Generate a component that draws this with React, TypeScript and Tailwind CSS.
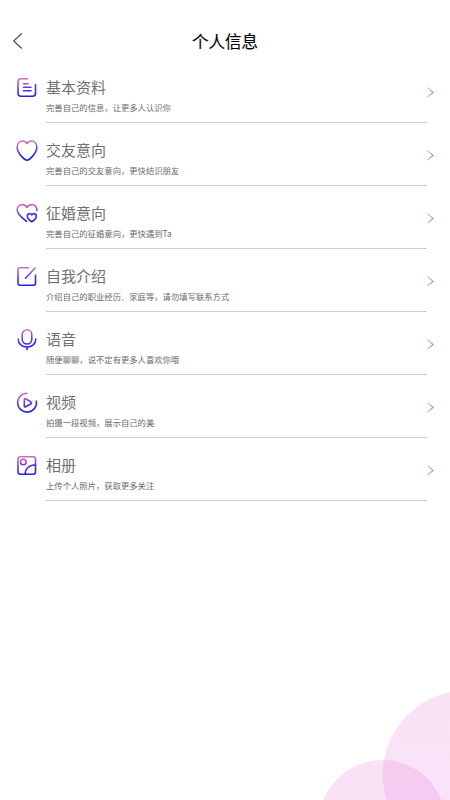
import React from 'react';

const icons: Record<string, React.ReactNode> = {
  profile: (
    <>
      <path d="M11.500 1.700H5a3 3 0 0 0-3 3v11.500a3 3 0 0 0 3 3h11.500a3 3 0 0 0 3-3V7.500" />
      <path d="M7.500 6.700h4.500M7.500 10.200h7.500M7.500 13.700h7.500" />
    </>
  ),
  heart: (
    <path d="M11 20.300C8.800 20 1.200 13.800 1.200 7.200C1.200 3.500 3.600 1 6.600 1c2 0 3.500 1 4.400 2.600C11.900 2 13.400 1 15.400 1c3 0 5.400 2.500 5.400 6.200C20.800 13.800 13.200 20 11 20.300z" />
  ),
  hearts: (
    <>
      <path d="M10.500 18.300C7 15.500 1.200 11.800 1.200 6.800C1.200 3.700 3.500 1.600 6.200 1.600c2 0 3.700 1 4.800 2.800C12.100 2.600 13.800 1.600 15.800 1.600c2.800 0 5 2.200 5 5.200v.7" />
      <path d="M15.800 18.800c-1-.6-4.500-3-4.500-5.700c0-1.500 1.100-2.500 2.400-2.500c.9 0 1.700.5 2.100 1.400c.4-.9 1.200-1.400 2.100-1.400c1.300 0 2.400 1 2.400 2.500c0 2.700-3.500 5.100-4.500 5.700z" />
    </>
  ),
  edit: (
    <>
      <path d="M12.500 1.700H3.800A1.800 1.800 0 0 0 2 3.500v13.900a1.800 1.800 0 0 0 1.800 1.800h13.900a1.800 1.800 0 0 0 1.800-1.800V9" />
      <path d="M9.500 12.200L19 2" />
    </>
  ),
  voice: (
    <>
      <rect x="6.200" y=".8" width="9.600" height="14.200" rx="4.800" />
      <path d="M2.200 10c0 4.800 3.800 8 8.800 8s8.800-3.200 8.800-8M11 18v2.600" />
    </>
  ),
  video: (
    <>
      <path d="M11 1.300A9.400 9.400 0 1 0 20.300 9" />
      <path d="M8.300 7.600v6.400c0 .8.700 1.200 1.400.8l5.300-3.100c.7-.4.700-1.300 0-1.700L9.700 6.800c-.7-.4-1.400 0-1.400.8z" />
    </>
  ),
  album: (
    <>
      <rect x="2" y="1.700" width="17.500" height="17.500" rx="2.200" />
      <circle cx="7.300" cy="7" r="2.800" />
      <path d="M9.200 19.200c0-5.500 4-9.300 10.300-9.300" />
    </>
  ),
};

const items = [
  { icon: 'profile', title: '基本资料', desc: '完善自己的信息，让更多人认识你' },
  { icon: 'heart', title: '交友意向', desc: '完善自己的交友意向，更快结识朋友' },
  { icon: 'hearts', title: '征婚意向', desc: '完善自己的征婚意向，更快遇到Ta' },
  { icon: 'edit', title: '自我介绍', desc: '介绍自己的职业经历、家庭等，请勿填写联系方式' },
  { icon: 'voice', title: '语音', desc: '随便聊聊，说不定有更多人喜欢你哦' },
  { icon: 'video', title: '视频', desc: '拍摄一段视频，展示自己的美' },
  { icon: 'album', title: '相册', desc: '上传个人照片，获取更多关注' },
];

function Row({ icon, title, desc }: { icon: string; title: string; desc: string }) {
  return (
    <li className="flex h-[62.94px] pl-4 pr-[23px]">
      <svg className="mt-[17px] h-[22px] w-[22px] shrink-0" viewBox="0 0 22 22" fill="none" stroke="url(#stroke)" strokeWidth="1.600" strokeLinecap="round" strokeLinejoin="round">
        {icons[icon]}
      </svg>
      <div className="ml-2 grow border-b border-[#cbcbcb]">
        <h2 className="mt-[16px] text-[15px] leading-[22px] text-[#707070]">{title}</h2>
        <p className="mt-[3px] text-[8.33px] leading-[12px] text-[#6a6a6a]">{desc}</p>
      </div>
      <svg className="-mr-[7px] mt-[27px] h-[11px] w-[7px] shrink-0" viewBox="0 0 7 11" fill="none" stroke="url(#arrow)" strokeWidth="1.100">
        <path d="M.4 .7L6 5.400L.4 10.100" />
      </svg>
    </li>
  );
}

export default function App() {
  return (
    <div className="relative h-[800px] w-[450px] overflow-hidden bg-white font-['Noto_Sans_CJK_SC',sans-serif]">
      <svg className="absolute h-0 w-0" aria-hidden="true">
        <defs>
          <linearGradient id="stroke" gradientUnits="userSpaceOnUse" x1="8" y1="1" x2="11" y2="21">
            <stop offset="0" stopColor="#d870ba" />
            <stop offset="0.300" stopColor="#a050c8" />
            <stop offset="0.550" stopColor="#5034e2" />
            <stop offset="0.800" stopColor="#3420ea" />
            <stop offset="1" stopColor="#2a18ee" />
          </linearGradient>
          <linearGradient id="arrow" gradientUnits="userSpaceOnUse" x1="0" y1="0" x2="7" y2="0">
            <stop offset="0" stopColor="#f0acd6" />
            <stop offset="1" stopColor="#9478e0" />
          </linearGradient>
        </defs>
      </svg>

      <svg className="absolute bottom-0 right-0 h-[120px] w-[140px]" viewBox="310 680 140 120">
        <defs>
          <linearGradient id="bubble" x1="0" y1="0" x2="0" y2="1">
            <stop offset="0" stopColor="#e664c8" />
            <stop offset="1" stopColor="#d46ee8" />
          </linearGradient>
        </defs>
        <circle cx="467.500" cy="775" r="84.800" fill="url(#bubble)" fillOpacity="0.190" />
        <circle cx="382.500" cy="823.500" r="63.500" fill="url(#bubble)" fillOpacity="0.190" />
      </svg>

      <header className="flex h-[60px] items-center pl-3 pt-[21px]">
        <svg className="h-4 w-[11px]" viewBox="0 0 11 16" fill="none" stroke="#444" strokeWidth="1.100">
          <path d="M9.700 .5L1.700 8l8 7.500" />
        </svg>
        <h1 className="grow text-center text-[16.5px] font-normal leading-[24px] text-black [-webkit-text-stroke:0.15px_black]">个人信息</h1>
        <div className="w-[23px]" />
      </header>

      <ul>
        {items.map((item) => (
          <Row key={item.icon} {...item} />
        ))}
      </ul>
    </div>
  );
}
